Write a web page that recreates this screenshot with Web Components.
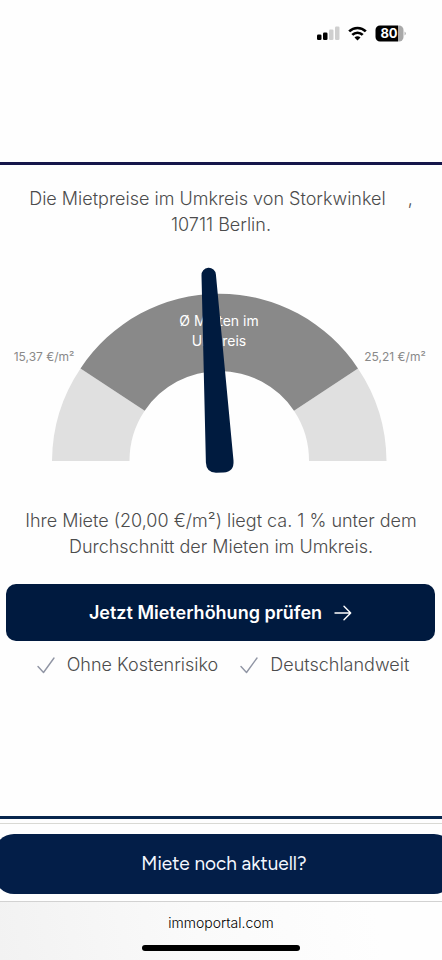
<!DOCTYPE html>
<html lang="de">
<head>
<meta charset="utf-8">
<meta name="viewport" content="width=device-width, initial-scale=1">
<title>Mietpreise im Umkreis</title>
<style>
  html, body { margin: 0; background: #fefefe; }
  body { font-family: Inter, "Liberation Sans", sans-serif; color: #4c4c4c; overflow-x: hidden; }
</style>
</head>
<body>
<rent-app></rent-app>

<script>
const define = (name, html) => {
  const template = document.createElement('template');
  template.innerHTML = html;
  customElements.define(name, class extends HTMLElement {
    constructor() {
      super();
      this.attachShadow({ mode: 'open' }).append(template.content.cloneNode(true));
    }
  });
};

define('status-bar', `
  <style>
    :host { display: flex; justify-content: flex-end; align-items: center; gap: 8px; height: 66px; padding-right: 36px; box-sizing: border-box; }
    svg { display: block; }
  </style>
  <svg width="23" height="16" viewBox="0 0 23 16" aria-hidden="true">
    <rect x="0" y="9.500" width="4.500" height="5.500" rx="1.300" fill="#000"/>
    <rect x="6" y="7.500" width="4.500" height="7.500" rx="1.300" fill="#000"/>
    <rect x="12" y="4.500" width="4.500" height="10.500" rx="1.300" fill="#cfcfcf"/>
    <rect x="18" y="1.500" width="4.500" height="13.500" rx="1.300" fill="#cfcfcf"/>
  </svg>
  <svg width="19" height="15" viewBox="0 0 19 15" fill="none" stroke="#000" stroke-width="2.700" aria-hidden="true">
    <path d="M1.200 5.400a11.800 11.800 0 0 1 16.600 0"/>
    <path d="M4.300 8.900a7.400 7.400 0 0 1 10.400 0"/>
    <path d="M9.500 14.500 6.500 11.500a4.200 4.200 0 0 1 6 0z" fill="#000" stroke="none"/>
  </svg>
  <svg width="31" height="17" viewBox="0 0 31 17" role="img" aria-label="Akku 80 Prozent">
    <path d="M5 .5h18v16H5A4.500 4.500 0 0 1 .5 12V5A4.500 4.500 0 0 1 5 .5z" fill="#000"/>
    <path d="M23 .5h1A4.500 4.500 0 0 1 28.500 5v7a4.500 4.500 0 0 1-4.500 4.500h-1z" fill="#a9a9a9"/>
    <path d="M29.500 6.500q1.500 1 1.500 2t-1.500 2z" fill="#b5b5b5"/>
    <text x="14" y="13" text-anchor="middle" font-family="Inter, sans-serif" font-size="13" font-weight="700" fill="#fff">80</text>
  </svg>`);

define('info-text', `
  <style>
    :host { display: block; }
    p { margin: 0; text-align: center; font-size: 18px; line-height: 26px; font-weight: 300; }
  </style>
  <p><slot></slot></p>`);

define('rent-gauge', `
  <style>
    :host { display: block; }
    svg { display: block; width: 100%; height: auto; font-family: Inter, "Liberation Sans", sans-serif; }
  </style>
  <svg viewBox="0 0 442 210" role="img" aria-label="Mietspanne im Umkreis">
    <path d="M52 197A167.500 167.500 0 0 1 80.500 104.500L144.700 146.700A90 90 0 0 0 129.500 197z" fill="#e0e0e0"/>
    <path d="M386.500 197A167.500 167.500 0 0 0 358 104.500L294 146.700A90 90 0 0 1 309 197z" fill="#e0e0e0"/>
    <path d="M80.500 104.500A166 166 0 0 1 358 104.500L294 146.700A90 90 0 0 0 144.700 146.700z" fill="#898989"/>
    <g fill="#fff" font-size="14" text-anchor="middle">
      <text x="219" y="62">Ø Mieten im</text>
      <text x="219" y="82">Umkreis</text>
    </g>
    <g fill="#898989" font-size="12" text-anchor="middle">
      <text x="44" y="97">15,37 €/m²</text>
      <text x="395" y="97">25,21 €/m²</text>
    </g>
    <path d="M201.500 11.500A7.200 7.200 0 0 1 215.900 10.500L233.500 196.500Q234.300 208 223.500 208.500L216 208.800Q206.300 208.600 205.900 198.500z" fill="#001b3f"/>
  </svg>`);

define('cta-button', `
  <style>
    :host { display: block; }
    button { display: flex; align-items: center; justify-content: center; gap: 12px; width: 100%; height: 57px; border: 0; border-radius: 10px; background: #001a3f; color: #fff; font: 600 18px/26px Inter, "Liberation Sans", sans-serif; cursor: pointer; }
  </style>
  <button type="button"><slot></slot>
    <svg width="18" height="16" viewBox="0 0 18 16" fill="none" stroke="#fff" stroke-width="1.400" stroke-linecap="round" stroke-linejoin="round" aria-hidden="true"><path d="M1 8h15.500M10 1.300 16.700 8 10 14.700"/></svg>
  </button>`);

define('check-item', `
  <style>
    :host { display: flex; align-items: center; gap: 12px; font-size: 18px; line-height: 26px; font-weight: 300; }
  </style>
  <svg width="18" height="17" viewBox="0 0 18 17" fill="none" stroke="#9095a4" stroke-width="1.400" stroke-linecap="round" stroke-linejoin="round" aria-hidden="true"><path d="M1 9.500 6.500 15.500 17 1"/></svg>
  <span><slot></slot></span>`);

define('sticky-action', `
  <style>
    :host { display: block; padding: 10px 0 7px; border-top: 1px solid #d9d9d4; border-bottom: 1px solid #d2d2d2; overflow: hidden; }
    button { display: block; width: calc(100% + 18px); margin: 0 -12px 0 -6px; height: 60px; padding: 0; border: 0; border-radius: 20px; background: #031e48; color: #f4f8ff; font: 400 19px/26px Figtree, Inter, "Liberation Sans", sans-serif; cursor: pointer; }
  </style>
  <button type="button"><slot></slot></button>`);

define('browser-bar', `
  <style>
    :host { display: flex; flex-direction: column; align-items: center; justify-content: space-between; height: 58px; padding: 11px 0 9px; box-sizing: border-box; background: linear-gradient(80deg, #f2f2f2, #fafafa 45%, #fefefe 85%); }
    a { color: #000; text-decoration: none; font-size: 14px; line-height: 20px; font-weight: 300; }
    i { width: 158px; height: 6px; border-radius: 3px; background: #000; }
  </style>
  <a href="#"><slot></slot></a><i></i>`);

define('rent-app', `
  <style>
    :host { display: flex; flex-direction: column; min-height: 100vh; }
    main { flex: 1; display: flex; flex-direction: column; margin-top: 96px; padding: 21px 6px 0; border-top: 3px solid #15164a; border-bottom: 3px solid #08264d; }
    rent-gauge { margin: 26px -6px 34px; }
    cta-button { margin: 24px 1px 0 0; }
    .gap { margin-left: 22px; }
    .checks { display: flex; flex-wrap: wrap; justify-content: center; gap: 0 22px; margin-top: 11px; padding-left: 4px; }
    sticky-action { margin-top: 4px; }
  </style>
  <status-bar></status-bar>
  <main>
    <info-text>Die Mietpreise im Umkreis von Storkwinkel<span class="gap">,</span> 10711&nbsp;Berlin.</info-text>
    <rent-gauge></rent-gauge>
    <info-text>Ihre Miete (20,00 €/m²) liegt ca. 1 % unter dem Durchschnitt der Mieten im Umkreis.</info-text>
    <cta-button>Jetzt Mieterhöhung prüfen</cta-button>
    <div class="checks">
      <check-item>Ohne Kostenrisiko</check-item>
      <check-item>Deutschlandweit</check-item>
    </div>
  </main>
  <sticky-action>Miete noch aktuell?</sticky-action>
  <browser-bar>immoportal.com</browser-bar>`);
</script>
</body>
</html>
